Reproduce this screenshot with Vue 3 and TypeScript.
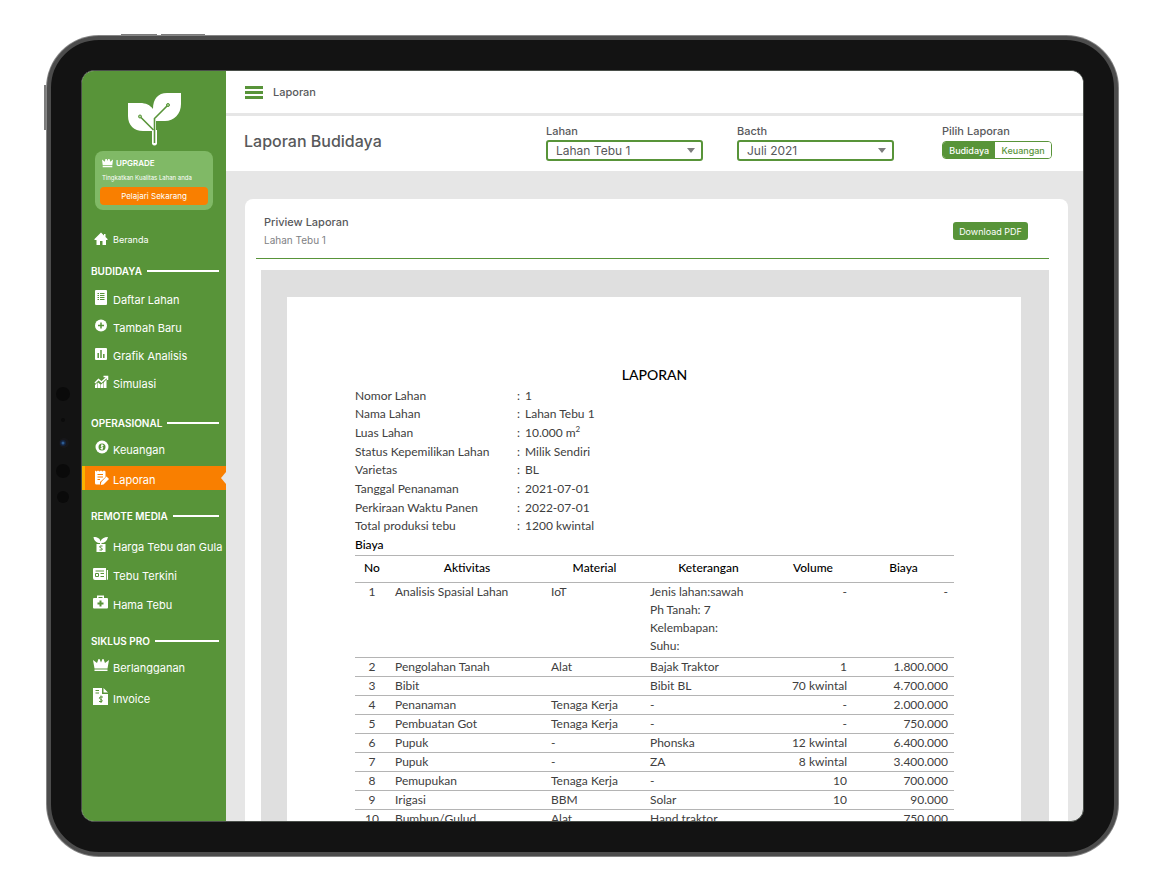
<script setup lang="ts">
import { ref } from 'vue'

interface MenuItem {
  label: string
  icon: string
}

interface MenuSection {
  id: string
  title: string
  items: MenuItem[]
}

interface CostRow {
  no: number
  activity: string
  material: string
  notes: string[]
  volume: string
  cost: string
}

const sections: MenuSection[] = [
  {
    id: 'budidaya',
    title: 'BUDIDAYA',
    items: [
      { label: 'Daftar Lahan', icon: 'list' },
      { label: 'Tambah Baru', icon: 'plus' },
      { label: 'Grafik Analisis', icon: 'chart' },
      { label: 'Simulasi', icon: 'trend' },
    ],
  },
  {
    id: 'operasional',
    title: 'OPERASIONAL',
    items: [
      { label: 'Keuangan', icon: 'coin' },
      { label: 'Laporan', icon: 'report' },
    ],
  },
  {
    id: 'remote',
    title: 'REMOTE MEDIA',
    items: [
      { label: 'Harga Tebu dan Gula', icon: 'plant' },
      { label: 'Tebu Terkini', icon: 'news' },
      { label: 'Hama Tebu', icon: 'kit' },
    ],
  },
  {
    id: 'siklus',
    title: 'SIKLUS PRO',
    items: [
      { label: 'Berlangganan', icon: 'crown' },
      { label: 'Invoice', icon: 'invoice' },
    ],
  },
]

const info = [
  { label: 'Nomor Lahan', value: '1' },
  { label: 'Nama Lahan', value: 'Lahan Tebu 1' },
  { label: 'Luas Lahan', value: '10.000 m', sup: '2' },
  { label: 'Status Kepemilikan Lahan', value: 'Milik Sendiri' },
  { label: 'Varietas', value: 'BL' },
  { label: 'Tanggal Penanaman', value: '2021-07-01' },
  { label: 'Perkiraan Waktu Panen', value: '2022-07-01' },
  { label: 'Total produksi tebu', value: '1200 kwintal' },
]

const rows: CostRow[] = [
  { no: 1, activity: 'Analisis Spasial Lahan', material: 'IoT', notes: ['Jenis lahan:sawah', 'Ph Tanah: 7', 'Kelembapan:', 'Suhu:'], volume: '-', cost: '-' },
  { no: 2, activity: 'Pengolahan Tanah', material: 'Alat', notes: ['Bajak Traktor'], volume: '1', cost: '1.800.000' },
  { no: 3, activity: 'Bibit', material: '', notes: ['Bibit BL'], volume: '70 kwintal', cost: '4.700.000' },
  { no: 4, activity: 'Penanaman', material: 'Tenaga Kerja', notes: ['-'], volume: '-', cost: '2.000.000' },
  { no: 5, activity: 'Pembuatan Got', material: 'Tenaga Kerja', notes: ['-'], volume: '-', cost: '750.000' },
  { no: 6, activity: 'Pupuk', material: '-', notes: ['Phonska'], volume: '12 kwintal', cost: '6.400.000' },
  { no: 7, activity: 'Pupuk', material: '-', notes: ['ZA'], volume: '8 kwintal', cost: '3.400.000' },
  { no: 8, activity: 'Pemupukan', material: 'Tenaga Kerja', notes: ['-'], volume: '10', cost: '700.000' },
  { no: 9, activity: 'Irigasi', material: 'BBM', notes: ['Solar'], volume: '10', cost: '90.000' },
  { no: 10, activity: 'Bumbun/Gulud', material: 'Alat', notes: ['Hand traktor'], volume: '', cost: '750.000' },
]

const activeItem = ref('Laporan')
const field = ref('Lahan Tebu 1')
const batch = ref('Juli 2021')
const reportType = ref('Budidaya')
</script>

<template>
  <div class="stage">
    <div class="device">
      <span class="side-key"></span>
      <span class="top-key top-key-first"></span>
      <span class="top-key top-key-second"></span>
      <svg class="sensors" viewBox="0 0 16 120" aria-hidden="true">
        <circle cx="8" cy="9" r="7" fill="#0a0a0a" />
        <circle cx="8" cy="35" r="2" fill="#0c0c0c" />
        <circle cx="9" cy="58" r="5" fill="#17171a" />
        <circle cx="8" cy="58" r="3" fill="#14243f" />
        <circle cx="8" cy="58" r="1.5" fill="#2d5c93" />
        <circle cx="8" cy="86" r="7" fill="#0a0a0a" />
        <circle cx="8" cy="112" r="6" fill="#0a0a0a" />
      </svg>

      <div class="screen">
        <aside class="sidebar">
          <svg class="logo" viewBox="0 0 54 54" role="img" aria-label="Logo">
            <path d="M1 11H13C19 11 23 13 26 17C26 7 31 1 40 1H54V12C54 22 47 29 38 29H29V39H16C7 39 1 33 1 24Z" fill="#fff" />
            <path d="M25 38H30V52Q27.500 55 25 52Z" fill="#fff" />
            <path d="M41 13L27.500 26.500V51" stroke="#589439" stroke-width="1.600" fill="none" />
            <path d="M13 24.500L26.500 38" stroke="#589439" stroke-width="1.600" fill="none" />
            <circle cx="41" cy="13" r="1.500" fill="#a9d095" stroke="#589439" />
            <circle cx="13" cy="24.500" r="1.500" fill="#a9d095" stroke="#589439" />
          </svg>

          <section class="upgrade">
            <h2>
              <svg viewBox="0 0 16 14" aria-hidden="true">
                <path d="M0 2L4 5L5 1H7L8 4L9 1H11L12 5L16 2L15 10H1ZM1 11H15V13H1Z" />
              </svg>
              UPGRADE
            </h2>
            <p>Tingkatkan Kualitas Lahan anda</p>
            <button type="button">Pelajari Sekarang</button>
          </section>

          <nav>
            <a class="home" href="#beranda">
              <svg viewBox="0 0 16 16" aria-hidden="true">
                <path d="M8 1.500L1.500 8V9H3.500V14H7V10H9.500V14H13V9H14.500V8L12.500 6V3H11V4.500Z" />
              </svg>
              <span>Beranda</span>
            </a>

            <section v-for="section in sections" :key="section.id" class="group" :class="section.id">
              <h3>{{ section.title }}</h3>
              <ul>
                <li v-for="item in section.items" :key="item.label">
                  <a href="#" :class="{ active: activeItem === item.label }" @click.prevent="activeItem = item.label">
                    <svg viewBox="0 0 16 16" aria-hidden="true">
                      <template v-if="item.icon === 'list'">
                        <rect x="2" y="0" width="12" height="15" rx="1" />
                        <path class="cut" d="M4.500 3.500H6M7 3.500H11.500M4.500 5.500H6M7 5.500H11.500M4.500 7.500H6M7 7.500H11.500M4.500 9.500H6M7 9.500H11.500" />
                      </template>
                      <template v-else-if="item.icon === 'plus'">
                        <circle cx="8" cy="7.500" r="6" />
                        <path class="cut medium" d="M8 4.500V10.500M5 7.500H11" />
                      </template>
                      <template v-else-if="item.icon === 'chart'">
                        <rect x="2" y="2" width="12" height="12" rx="1" />
                        <path class="cut medium" d="M5.200 7V12M8 4V12M10.800 8V12" />
                      </template>
                      <template v-else-if="item.icon === 'trend'">
                        <path d="M2 11L4.500 8.500V14H2ZM5 8.500L7.500 10.500V14H5ZM8 10.500L10.500 8.500V14H8ZM11 8L13.500 5.500V14H11Z" />
                        <path class="line medium" d="M2 9L5.500 5.500L8.500 8L14 3M10.500 2.500H14.500V6" />
                      </template>
                      <template v-else-if="item.icon === 'coin'">
                        <circle cx="9" cy="7" r="6.500" />
                        <circle cx="9" cy="7" r="3.500" fill="#589439" />
                        <path class="line" d="M10.500 5.500H8.500Q7.500 6.500 9 7Q10.500 7.500 9.500 8.500H7.500M9 4V10" />
                      </template>
                      <template v-else-if="item.icon === 'report'">
                        <path d="M2 0.500L3.500 1.500L5 0.500L6.500 1.500L8 0.500L9.500 1.500L11 0.500L12.500 1.500V7L7 12V14.500H3.500Q2 14.500 2 13Z" />
                        <path class="cut" d="M4.500 4.500H10M4.500 7H10M4.500 9.500H7" />
                        <path d="M13.500 6.500L16 9L10.500 14.500L7.800 15L8.300 12Z" />
                      </template>
                      <template v-else-if="item.icon === 'plant'">
                        <path d="M0.500 0C5 0 7 1.500 7.500 4.500C8.500 1.500 11 0 15 0C14 4 12 6 8.500 6V7H12.500V15H3.500V7H7V6C4 6 1 4 0.500 0Z" />
                        <path class="cut" d="M9.500 9H7Q6 10.500 8 11Q10 11.500 9 13H6.500" />
                      </template>
                      <template v-else-if="item.icon === 'news'">
                        <path d="M1 2H13V14H2Q0 14 0 12V3Q0 2 1 2ZM13.800 4H15V13Q15 14 13.800 14Z" />
                        <path class="cut" d="M2.500 5H11M2.500 7.500H5.500V10.500H2.500ZM7.500 7.500H11M7.500 10.500H11" />
                      </template>
                      <template v-else-if="item.icon === 'kit'">
                        <path d="M4 0.500H11V3H14Q15 3 15 4V12.500Q15 13.500 14 13.500H1Q0 13.500 0 12.500V4Q0 3 1 3H4ZM5.500 2V3H9.500V2Z" fill-rule="evenodd" />
                        <path class="cut thick" d="M7.500 5.500V11.500M4.500 8.500H10.500" />
                      </template>
                      <template v-else-if="item.icon === 'crown'">
                        <path d="M0 2L4 5L5.500 1H6.500L8 4.500L9.500 1H10.500L12 5L16 2L14.500 10.500H1.500ZM1.500 11.500H14.500V13H1.500Z" />
                      </template>
                      <template v-else>
                        <path d="M0 -1H9V5H15V16H0ZM10.500 -1L15 3.500H10.500Z" />
                        <path class="cut" d="M2.500 1.500H6M2.500 4H6M10 8H7Q5.500 9.500 7.500 10.200Q10 11 9 12.500H6M8 6.500V14" />
                      </template>
                    </svg>
                    <span>{{ item.label }}</span>
                  </a>
                </li>
              </ul>
            </section>
          </nav>
        </aside>

        <main>
          <header class="topbar">
            <button type="button" class="burger" aria-label="Menu">
              <i></i><i></i><i></i>
            </button>
            <span>Laporan</span>
          </header>

          <div class="filters">
            <h1>Laporan Budidaya</h1>
            <div class="field">
              <label for="lahan">Lahan</label>
              <div class="select">
                <select id="lahan" v-model="field">
                  <option>Lahan Tebu 1</option>
                </select>
                <svg viewBox="0 0 8 5" aria-hidden="true"><path d="M0 0H8L4 5Z" /></svg>
              </div>
            </div>
            <div class="field">
              <label for="batch">Bacth</label>
              <div class="select">
                <select id="batch" v-model="batch">
                  <option>Juli 2021</option>
                </select>
                <svg viewBox="0 0 8 5" aria-hidden="true"><path d="M0 0H8L4 5Z" /></svg>
              </div>
            </div>
            <div class="field switch-field">
              <span id="report-type">Pilih Laporan</span>
              <div class="switch" role="group" aria-labelledby="report-type">
                <button
                  v-for="type in ['Budidaya', 'Keuangan']"
                  :key="type"
                  type="button"
                  :aria-pressed="reportType === type"
                  :class="{ on: reportType === type }"
                  @click="reportType = type"
                >{{ type }}</button>
              </div>
            </div>
          </div>

          <section class="card">
            <div class="card-head">
              <div>
                <h2>Priview Laporan</h2>
                <p>Lahan Tebu 1</p>
              </div>
              <button type="button">Download PDF</button>
            </div>
            <div class="viewer">
              <article class="paper">
                <h2>LAPORAN</h2>
                <dl>
                  <div v-for="entry in info" :key="entry.label">
                    <dt>{{ entry.label }}</dt>
                    <dd>{{ entry.value }}<sup v-if="entry.sup">{{ entry.sup }}</sup></dd>
                  </div>
                </dl>
                <table>
                  <caption>Biaya</caption>
                  <colgroup>
                    <col class="c-no" />
                    <col class="c-activity" />
                    <col class="c-material" />
                    <col class="c-notes" />
                    <col class="c-volume" />
                    <col class="c-cost" />
                  </colgroup>
                  <thead>
                    <tr>
                      <th>No</th>
                      <th>Aktivitas</th>
                      <th>Material</th>
                      <th>Keterangan</th>
                      <th>Volume</th>
                      <th>Biaya</th>
                    </tr>
                  </thead>
                  <tbody>
                    <tr v-for="row in rows" :key="row.no">
                      <td class="center">{{ row.no }}</td>
                      <td>{{ row.activity }}</td>
                      <td>{{ row.material }}</td>
                      <td><div v-for="note in row.notes" :key="note">{{ note }}</div></td>
                      <td class="right">{{ row.volume }}</td>
                      <td class="right">{{ row.cost }}</td>
                    </tr>
                  </tbody>
                </table>
              </article>
            </div>
          </section>
        </main>
      </div>
    </div>
  </div>
</template>

<style>
body {
  margin: 0;
  background: #fff;
}
</style>

<style scoped>
* {
  box-sizing: border-box;
}

h1, h2, h3, p, ul, dl, dd {
  margin: 0;
  padding: 0;
}

button, select {
  font: inherit;
  border: 0;
  padding: 0;
  cursor: pointer;
}

.stage {
  height: 100vh;
  padding: 36px 45px 34px 47px;
  font-family: Inter, "Liberation Sans", sans-serif;
  font-size: 11px;
  color: #58595b;
}

.device {
  position: relative;
  height: 100%;
  padding: 30px;
  background: #131313;
  border: 4px solid #4c4c4c;
  border-radius: 52px;
  box-shadow: 0 0 0 1px #868686;
}

.side-key, .top-key {
  position: absolute;
  background: #7c7c7c;
}

.side-key {
  left: -7px;
  top: 45px;
  width: 2px;
  height: 45px;
}

.top-key {
  top: -6px;
  height: 1px;
}

.top-key-first {
  left: 70px;
  width: 36px;
}

.top-key-second {
  left: 110px;
  width: 44px;
}

.sensors {
  position: absolute;
  left: 4px;
  top: 345px;
  width: 16px;
  height: 120px;
}

.screen {
  display: flex;
  height: 100%;
  overflow: hidden;
  border: 1px solid #4a4f4a;
  border-radius: 13px;
  background: #e6e6e6;
}

/* Sidebar */
.sidebar {
  flex: 0 0 144px;
  padding-top: 21px;
  background: #589439;
  color: #fff;
}

.logo {
  display: block;
  width: 54px;
  height: 54px;
  margin-left: 45px;
}

.upgrade {
  margin: 5px 13px 0;
  height: 59px;
  padding: 7px 5px 0;
  border-radius: 8px;
  background: #80b966;
}

.upgrade h2 {
  display: flex;
  align-items: center;
  gap: 3px;
  padding-left: 2px;
  font-size: 8px;
  line-height: 10px;
  font-weight: 600;
}

.upgrade svg {
  width: 11px;
  height: 10px;
  fill: #fff;
}

.upgrade p {
  margin-top: 6px;
  padding-left: 2px;
  font-size: 6px;
  line-height: 8px;
  white-space: nowrap;
}

.upgrade button {
  display: block;
  width: 100%;
  height: 18px;
  margin-top: 5px;
  border-radius: 4px;
  background: #f97f00;
  color: #fff;
  font-size: 8px;
}

.home, .group a {
  display: flex;
  align-items: center;
  gap: 4px;
  height: 24px;
  padding-left: 11px;
  color: #fff;
  text-decoration: none;
  white-space: nowrap;
}

nav svg {
  flex: none;
  width: 16px;
  height: 16px;
  overflow: visible;
  fill: #fff;
}

nav .cut {
  fill: none;
  stroke: #589439;
  stroke-width: 1;
}

nav .line {
  fill: none;
  stroke: #fff;
  stroke-width: 1;
}

nav .medium {
  stroke-width: 1.5;
}

nav .thick {
  stroke-width: 2;
}

.home {
  margin-top: 17px;
  font-size: 9px;
}

.group h3 {
  display: flex;
  align-items: center;
  gap: 5px;
  height: 16px;
  margin: 0 7px 5px 9px;
  font-size: 10px;
  font-weight: 600;
  white-space: nowrap;
}

.group h3::after {
  content: "";
  flex: 1;
  height: 2px;
  background: #fff;
}

.group ul {
  display: grid;
  gap: 4px;
  list-style: none;
}

.group a span {
  padding-top: 3px;
}

.budidaya {
  margin-top: 12px;
}

.budidaya h3 {
  margin-bottom: 7px;
}

.operasional {
  margin-top: 21px;
}

.operasional ul {
  gap: 6px;
}

.remote {
  margin-top: 18px;
}

.remote h3 {
  margin-bottom: 9px;
}

.remote ul {
  gap: 5px;
}

.siklus {
  margin-top: 18px;
}

.siklus ul {
  gap: 7px;
}

.group a.active {
  position: relative;
  padding-left: 8px;
  border-left: 3px solid #f9b300;
  background: #f97f00;
}

.active::after {
  content: "";
  position: absolute;
  right: 0;
  top: 6px;
  border: 6px solid transparent;
  border-right: 5px solid #e6e6e6;
  border-left: 0;
}

.active .cut {
  stroke: #f97f00;
}

/* Content column */
main {
  flex: 1;
  min-width: 0;
}

.topbar {
  display: flex;
  align-items: center;
  gap: 10px;
  height: 42px;
  padding-left: 19px;
  background: #fff;
  font-weight: 500;
}

.burger {
  display: grid;
  gap: 2px;
  width: 18px;
  background: none;
}

.burger i {
  height: 3px;
  background: #589439;
}

.filters {
  display: flex;
  gap: 34px;
  height: 55px;
  margin-top: 3px;
  padding: 7px 31px 0 18px;
  background: #fff;
}

.filters h1 {
  flex: 1;
  padding-top: 8px;
  font-size: 16px;
  line-height: 20px;
  font-weight: 500;
}

.field {
  width: 157px;
  font-weight: 500;
}

.field label, .field > span {
  display: block;
  line-height: 17px;
}

.switch-field {
  width: 110px;
  margin-left: 14px;
}

.select {
  position: relative;
}

.select select {
  display: block;
  width: 100%;
  height: 21px;
  padding: 0 20px 0 8px;
  appearance: none;
  border: 2px solid #589439;
  border-radius: 3px;
  background: #fff;
  color: #58595b;
  font-size: 12px;
  font-weight: 400;
}

.select svg {
  position: absolute;
  right: 8px;
  top: 8px;
  width: 8px;
  height: 5px;
  fill: #7d7d7d;
  pointer-events: none;
}

.switch {
  display: flex;
  height: 18px;
  margin-top: 1px;
  overflow: hidden;
  border: 1px solid #589439;
  border-radius: 4px;
}

.switch button {
  flex: 1 1 auto;
  background: #fff;
  color: #589439;
  font-size: 9px;
}

.switch .on {
  background: #589439;
  color: #fff;
}

.card {
  margin: 28px 15px 0 19px;
  padding: 0 19px 0 11px;
  border-radius: 8px;
  background: #fff;
}

.card-head {
  display: flex;
  justify-content: space-between;
  align-items: flex-start;
  height: 60px;
  padding: 14px 21px 0 8px;
  border-bottom: 1px solid #589439;
}

.card-head h2 {
  font-size: 11px;
  line-height: 18px;
  font-weight: 500;
}

.card-head p {
  font-size: 10px;
  line-height: 18px;
  color: #808184;
}

.card-head button {
  width: 75px;
  height: 18px;
  margin-top: 9px;
  border-radius: 3px;
  background: #589439;
  color: #fff;
  font-size: 9px;
}

.viewer {
  margin: 11px 0 0 5px;
  padding: 27px 28px 0 26px;
  background: #dfdfdf;
}

/* Report sheet */
.paper {
  padding: 67px 67px 60px 68px;
  background: #fff;
  font-family: Lato, "Liberation Sans", sans-serif;
  font-size: 12px;
  color: #404040;
}

.paper h2 {
  font-size: 14px;
  line-height: 22px;
  font-weight: 500;
  text-align: center;
  color: #000;
}

.paper dl {
  display: grid;
  grid-template-rows: repeat(8, 1fr);
  height: 149px;
}

.paper dl div {
  display: flex;
  align-items: center;
}

.paper dt {
  width: 162px;
}

.paper dd::before {
  content: ":";
  display: inline-block;
  width: 8px;
}

.paper sup {
  font-size: 8px;
  line-height: 1;
}

.paper table {
  width: 100%;
  table-layout: fixed;
  border-collapse: collapse;
}

.paper caption {
  height: 20px;
  line-height: 20px;
  text-align: left;
  font-weight: 500;
  color: #000;
}

.c-no { width: 34px; }
.c-activity { width: 156px; }
.c-material { width: 99px; }
.c-notes { width: 129px; }
.c-volume { width: 80px; }
.c-cost { width: 101px; }

.paper th, .paper td {
  padding: 0 6px;
  line-height: 18px;
  text-align: left;
  vertical-align: top;
  white-space: nowrap;
  border-top: 1px solid #b4b4b4;
}

.paper th {
  height: 27px;
  line-height: 24px;
  text-align: center;
  font-weight: 500;
  color: #000;
}

.paper tbody tr:first-child td {
  padding-bottom: 2px;
}

.paper .center {
  text-align: center;
}

.paper .right {
  text-align: right;
}
</style>
